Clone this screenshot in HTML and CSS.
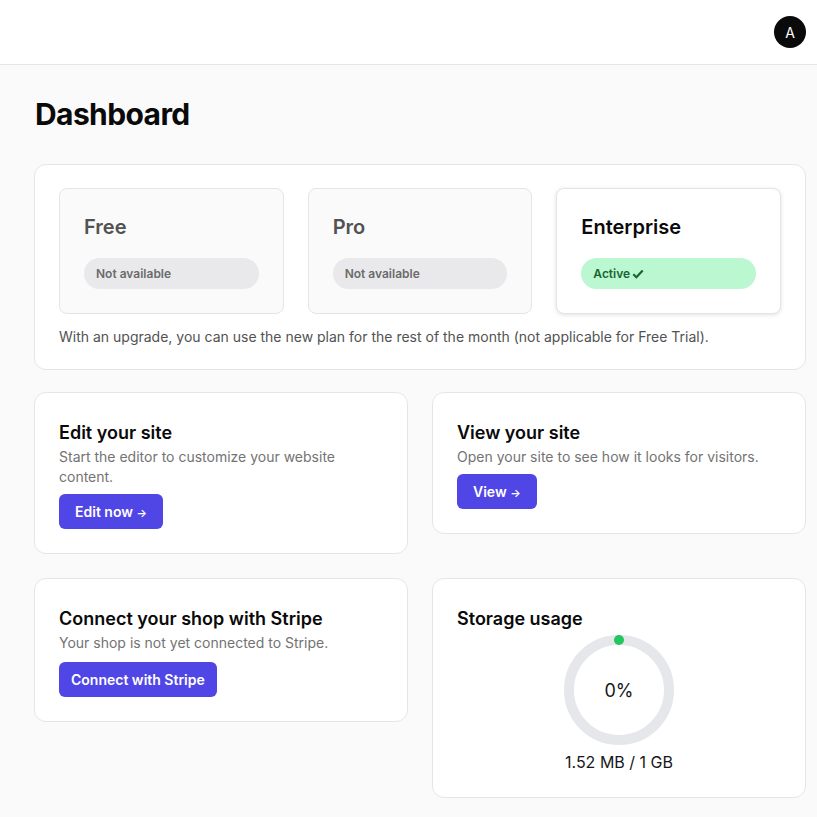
FILE: index.html
```html
<!DOCTYPE html>
<html lang="en">
<head>
    <meta charset="UTF-8">
    <meta name="viewport" content="width=device-width, initial-scale=1.0">
    <title>Dashboard</title>
    <link rel="stylesheet" href="styles.css">
</head>
<body>

<header class="topbar">
    <div class="avatar">A</div>
</header>

<main class="page">
    <h1>Dashboard</h1>

    <section class="card plans">
        <div class="plan-list">
            <div class="plan">
                <h3>Free</h3>
                <span class="pill">Not available</span>
            </div>
            <div class="plan">
                <h3>Pro</h3>
                <span class="pill">Not available</span>
            </div>
            <div class="plan current">
                <h3>Enterprise</h3>
                <span class="pill active">Active
                    <svg width="12" height="12" viewBox="0 0 12 12"><path d="M1.3 6.3 L4.4 9.3 L10.7 2.6" fill="none" stroke="currentColor" stroke-width="2.2"/></svg>
                </span>
            </div>
        </div>
        <p class="note">With an upgrade, you can use the new plan for the rest of the month (not applicable for Free Trial).</p>
    </section>

    <div class="grid">
        <section class="card">
            <h2>Edit your site</h2>
            <p>Start the editor to customize your website content.</p>
            <button class="btn">Edit now <span class="arrow">&#8594;</span></button>
        </section>

        <section class="card">
            <h2>View your site</h2>
            <p>Open your site to see how it looks for visitors.</p>
            <button class="btn">View <span class="arrow">&#8594;</span></button>
        </section>

        <section class="card stripe">
            <h2>Connect your shop with Stripe</h2>
            <p>Your shop is not yet connected to Stripe.</p>
            <button class="btn wide">Connect with Stripe</button>
        </section>

        <section class="card storage">
            <h2>Storage usage</h2>
            <div class="ring">
                <svg width="110" height="110" viewBox="0 0 110 110">
                    <circle cx="55" cy="55" r="50" fill="none" stroke="#e5e7eb" stroke-width="10"/>
                    <circle cx="55" cy="5" r="5" fill="#22c55e"/>
                </svg>
                <span class="percent">0%</span>
            </div>
            <div class="usage">1.52 MB / 1 GB</div>
        </section>
    </div>
</main>

</body>
</html>
```

FILE: styles.css
```css
* {
    margin: 0;
    padding: 0;
    box-sizing: border-box;
}

body {
    font-family: Inter, "Liberation Sans", sans-serif;
    background: #fafafa;
    color: #0a0a0a;
}

.topbar {
    height: 65px;
    background: #fff;
    border-bottom: 1px solid #e5e5e5;
    display: flex;
    justify-content: flex-end;
    align-items: center;
    padding-right: 11px;
}

.avatar {
    width: 32px;
    height: 32px;
    border-radius: 50%;
    background: #0a0a0a;
    color: #fff;
    font-size: 14px;
    display: flex;
    align-items: center;
    justify-content: center;
}

.page {
    padding: 31px 11px 24px 34px;
}

h1 {
    font-size: 30px;
    font-weight: 700;
    line-height: 36px;
    letter-spacing: -0.6px;
    margin-left: 1px;
    margin-bottom: 32px;
}

.card {
    background: #fff;
    border: 1px solid #e5e5e5;
    border-radius: 12px;
    padding: 26px 24px 24px;
}

.plans {
    padding: 23px 24px 22px;
    margin-bottom: 22px;
}

.plan-list {
    display: grid;
    grid-template-columns: repeat(3, 1fr);
    gap: 24px;
    margin-bottom: 13px;
}

.plan {
    background: #fafafa;
    border: 1px solid #e5e5e5;
    border-radius: 8px;
    padding: 24px;
    height: 126px;
}

.plan h3 {
    font-size: 20px;
    font-weight: 600;
    line-height: 28px;
    color: #525252;
    margin-bottom: 17px;
}

.plan.current {
    background: #fff;
    box-shadow: 0 1px 4px rgba(0, 0, 0, 0.12);
}

.plan.current h3 {
    color: #0a0a0a;
}

.pill {
    display: flex;
    align-items: center;
    gap: 2px;
    height: 31px;
    padding: 0 12px;
    border-radius: 16px;
    background: #e9e9eb;
    color: #6b6b6b;
    font-size: 12px;
    font-weight: 600;
}

.pill.active {
    background: #bbf7d0;
    color: #166534;
}

.plans .note {
    font-size: 14px;
    line-height: 20px;
    color: #525252;
    margin: 0;
}

.grid {
    display: grid;
    grid-template-columns: 1fr 1fr;
    gap: 24px;
    align-items: start;
}

.card h2 {
    font-size: 18px;
    font-weight: 600;
    line-height: 28px;
    color: #0a0a0a;
}

.card p {
    font-size: 14px;
    line-height: 20px;
    color: #737373;
    margin-bottom: 7px;
}

.stripe p {
    margin-bottom: 9px;
}

.btn {
    font-family: inherit;
    background: #4f46e5;
    color: #fff;
    border: none;
    border-radius: 6px;
    height: 35px;
    padding: 0 16px;
    font-size: 14px;
    font-weight: 600;
}

.btn.wide {
    padding: 0 12px;
}

.arrow {
    font-size: 11px;
}

.storage {
    display: flex;
    flex-direction: column;
    padding-bottom: 23px;
}

.ring {
    position: relative;
    width: 110px;
    height: 110px;
    margin: 2px auto 5px;
}

.ring svg {
    display: block;
}

.percent {
    position: absolute;
    inset: 0;
    display: flex;
    align-items: center;
    justify-content: center;
    font-size: 18px;
    color: #171717;
}

.usage {
    text-align: center;
    font-size: 16px;
    line-height: 24px;
    color: #171717;
}
```
